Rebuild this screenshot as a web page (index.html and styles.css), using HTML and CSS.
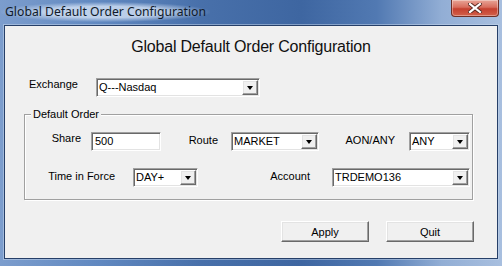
FILE: index.html
```html
<!DOCTYPE html>
<html lang="en">
<head>
  <meta charset="UTF-8" />
  <title>Global Default Order Configuration</title>
  <link rel="stylesheet" href="styles.css">
</head>
<body>
  <div class="window">
    <div class="titlebar">
      <span class="title">Global Default Order Configuration</span>
      <button class="close" title="Close">
        <svg width="14" height="10" viewBox="0 0 14 10">
          <path d="M2 1 L12 9 M12 1 L2 9" stroke="#5a2a22" stroke-width="4" stroke-linecap="square" />
          <path d="M2 1 L12 9 M12 1 L2 9" stroke="#fff" stroke-width="2.2" stroke-linecap="square" />
        </svg>
      </button>
    </div>

    <div class="client">
      <h1 class="heading">Global Default Order Configuration</h1>

      <div class="exchange-row">
        <label class="lbl f-exchange">Exchange</label>
        <div class="combo w-exchange"><span class="value">Q---Nasdaq</span><span class="drop"></span></div>
      </div>

      <fieldset class="group">
        <legend>Default Order</legend>
        <div class="group-row">
          <label class="lbl f-share">Share</label>
          <div class="edit w-share">500</div>
          <label class="lbl f-route">Route</label>
          <div class="combo w-route"><span class="value">MARKET</span><span class="drop"></span></div>
          <label class="lbl f-aon">AON/ANY</label>
          <div class="combo w-aon"><span class="value">ANY</span><span class="drop"></span></div>
        </div>
        <div class="group-row row-second">
          <label class="lbl f-tif">Time in Force</label>
          <div class="combo w-tif"><span class="value">DAY+</span><span class="drop"></span></div>
          <label class="lbl f-account">Account</label>
          <div class="combo w-account"><span class="value">TRDEMO136</span><span class="drop"></span></div>
        </div>
      </fieldset>

      <div class="buttons">
        <button class="btn">Apply</button>
        <button class="btn">Quit</button>
      </div>
    </div>
  </div>
</body>
</html>
```

FILE: styles.css
```css
body {
  margin: 0;
  font-family: "Liberation Sans", Arial, sans-serif;
  font-size: 11px;
  color: #000;
}
.window {
  width: 502px;
  height: 266px;
  display: flex;
  flex-direction: column;
  box-sizing: border-box;
  background: linear-gradient(to right, #7c9dcd 0%, #6088c0 20%, #4870aa 40%, #3e66a1 60%, #5179b2 75%, #92aed5 88%, #a8bfdf 100%);
}
.titlebar {
  height: 25px;
  display: flex;
  align-items: flex-start;
}
.title {
  margin: 2px 0 0 1px;
  padding: 1px 4px;
  font-family: "Noto Sans", sans-serif;
  font-size: 12.2px;
  line-height: 18px;
  color: #101a2a;
  background: radial-gradient(ellipse at center, rgba(220, 232, 248, 0.75) 40%, rgba(220, 232, 248, 0) 72%);
}
.close {
  margin: 0 3px 0 auto;
  width: 48px;
  height: 17px;
  padding: 0;
  display: flex;
  align-items: center;
  justify-content: center;
  border: 1px solid #6e2f26;
  border-top: none;
  border-radius: 0 0 4px 4px;
  background: linear-gradient(#e8a597, #d86d5d 45%, #c5402f 55%, #d2604a);
  box-shadow: inset 0 0 0 1px rgba(255, 255, 255, 0.35);
}
.client {
  flex: 1;
  margin: 0 4px 7px 4px;
  border: 1px solid #263f68;
  background: #f0f0f0;
  box-shadow: 0 0 0 1px rgba(200, 215, 235, 0.5);
}
.heading {
  margin: 11px 0 0;
  font-size: 16px;
  line-height: 20px;
  font-weight: normal;
  letter-spacing: -0.2px;
  text-align: center;
  color: #111;
}
.exchange-row {
  display: flex;
  margin-top: 21px;
  padding-left: 24px;
}
.lbl {
  line-height: 13px;
  padding-top: 1px;
  white-space: nowrap;
}
.f-exchange {
  width: 67px;
  padding-top: 0;
}

/* sunken 3D edit and combo boxes */
.edit, .combo {
  height: 19px;
  box-sizing: border-box;
  border: 1px solid;
  border-color: #a0a0a0 #fff #fff #a0a0a0;
  box-shadow: inset 1px 1px #696969, inset -1px -1px #e3e3e3;
  background: #fff;
  padding: 1px;
  line-height: 15px;
}
.edit {
  padding-left: 3px;
}
.combo {
  display: flex;
}
.combo .value {
  flex: 1;
  padding-left: 1px;
}
.drop {
  width: 16px;
  box-sizing: border-box;
  border: 1px solid;
  border-color: #fff #696969 #696969 #fff;
  box-shadow: inset -1px -1px #a0a0a0, inset 1px 1px #e3e3e3;
  background: #f0f0f0;
  display: flex;
  align-items: center;
  justify-content: center;
}
.drop::after {
  content: "";
  border-left: 3.5px solid transparent;
  border-right: 3.5px solid transparent;
  border-top: 4px solid #000;
  margin-top: 1px;
}
.w-exchange { width: 164px; }

.group {
  width: 449px;
  box-sizing: border-box;
  margin: 10px 0 0 19px;
  padding: 0 0 12px 5px;
  border: 1px solid #a0a0a0;
  box-shadow: inset 1px 1px #fff, 1px 1px #fff;
}
.group legend {
  margin-left: 1px;
  padding: 0 2px;
  line-height: 14px;
  background: #f0f0f0;
}
.group-row {
  display: flex;
  margin-top: 11px;
}
.group-row.row-second {
  margin-top: 17px;
}
.group-row .lbl {
  text-align: right;
  padding-top: 2px;
}
.f-share { width: 51px; margin-right: 10px; padding-top: 0 !important; }
.w-share { width: 70px; }
.f-route { width: 57px; margin-right: 13px; }
.w-route { width: 88px; }
.f-aon { width: 76px; margin-right: 14px; }
.w-aon { width: 61px; }
.f-tif { width: 85px; margin-right: 18px; }
.w-tif { width: 65px; }
.f-account { width: 112px; margin-right: 22px; }
.w-account { width: 138px; }

.buttons {
  display: flex;
  justify-content: flex-end;
  gap: 17px;
  margin-top: 21px;
  padding-right: 23px;
}
.btn {
  width: 88px;
  height: 21px;
  padding: 0;
  font-family: inherit;
  font-size: 11px;
  border: 1px solid;
  border-color: #fff #696969 #696969 #fff;
  box-shadow: inset -1px -1px #a0a0a0, inset 1px 1px #e3e3e3;
  background: #f0f0f0;
  color: #000;
}
```
